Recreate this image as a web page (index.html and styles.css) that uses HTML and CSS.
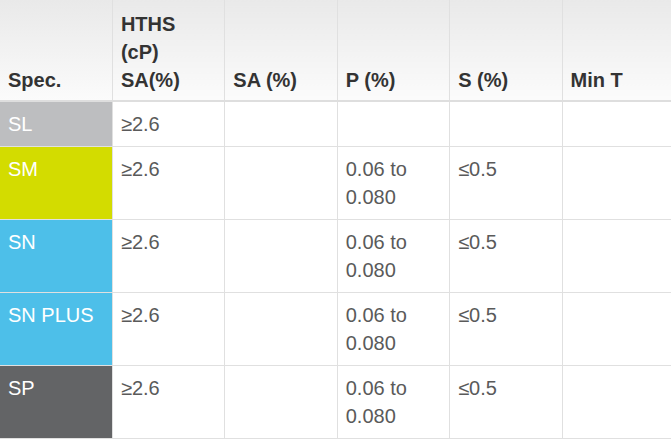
FILE: index.html
```html
<!DOCTYPE html>
<html>
<head>
<meta charset="utf-8">
<link rel="stylesheet" href="styles.css">
</head>
<body>
<table class="spec-table">
  <thead>
    <tr>
      <th>Spec.</th>
      <th>HTHS<br>(cP)<br>SA(%)</th>
      <th>SA (%)</th>
      <th>P (%)</th>
      <th>S (%)</th>
      <th>Min T</th>
    </tr>
  </thead>
  <tbody>
    <tr>
      <td class="spec spec-sl">SL</td>
      <td>≥2.6</td>
      <td></td>
      <td></td>
      <td></td>
      <td></td>
    </tr>
    <tr>
      <td class="spec spec-sm">SM</td>
      <td>≥2.6</td>
      <td></td>
      <td>0.06 to<br>0.080</td>
      <td>≤0.5</td>
      <td></td>
    </tr>
    <tr>
      <td class="spec spec-sn">SN</td>
      <td>≥2.6</td>
      <td></td>
      <td>0.06 to<br>0.080</td>
      <td>≤0.5</td>
      <td></td>
    </tr>
    <tr>
      <td class="spec spec-sn">SN PLUS</td>
      <td>≥2.6</td>
      <td></td>
      <td>0.06 to<br>0.080</td>
      <td>≤0.5</td>
      <td></td>
    </tr>
    <tr>
      <td class="spec spec-sp">SP</td>
      <td>≥2.6</td>
      <td></td>
      <td>0.06 to<br>0.080</td>
      <td>≤0.5</td>
      <td></td>
    </tr>
  </tbody>
</table>
</body>
</html>
```

FILE: styles.css
```css
html, body {
  margin: 0;
  padding: 0;
  background: #ffffff;
  overflow: hidden;
}

.spec-table {
  width: 675px;
  table-layout: fixed;
  border-collapse: collapse;
  font-family: "Liberation Sans", Arial, sans-serif;
  font-size: 20px;
  line-height: 28px;
}

.spec-table th,
.spec-table td {
  padding: 8px 8px 8px 8px;
  text-align: left;
  vertical-align: top;
  border: 1px solid #e0e0e0;
}

.spec-table tr > :first-child {
  border-left: none;
}

.spec-table thead th {
  background: linear-gradient(#e9e9e9, #fbfbfb);
  color: #333333;
  font-weight: bold;
  vertical-align: bottom;
  padding-top: 10px;
  padding-bottom: 6px;
  border-top: none;
  border-bottom: 2px solid #dedede;
}

.spec-table td {
  color: #5a5a5a;
  background: #ffffff;
}

.spec-table td.spec {
  color: #ffffff;
}

.spec-sl { background: #bdbec0 !important; }
.spec-sm { background: #d3dc00 !important; }
.spec-sn { background: #4dbfe9 !important; }
.spec-sp { background: #636466 !important; }
```
